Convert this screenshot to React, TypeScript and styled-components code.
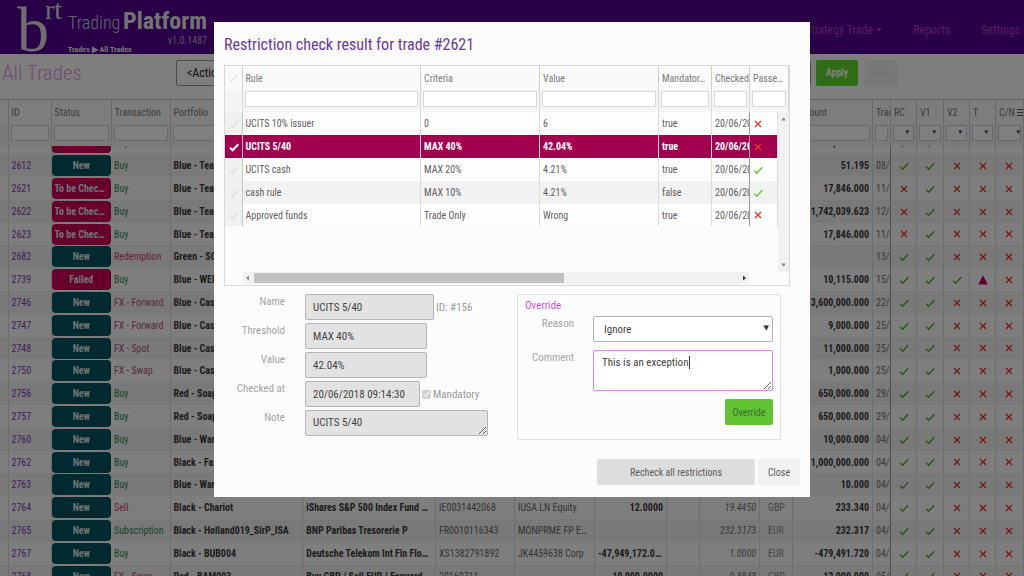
import React from "react";
import styled, { createGlobalStyle, css } from "styled-components";

const GlobalStyle = createGlobalStyle`
  * { box-sizing: border-box; }
  body { margin: 0; background: #fcfcfc; }
  body, button, input, select, textarea {
    font-family: "Roboto Condensed", "Liberation Sans Narrow", Roboto, sans-serif;
  }
  button, input, select, textarea { margin: 0; }
`;

/* ---------- icons ---------- */

const Icon = styled.svg`
  display: block;
  flex: none;
`;

const Check = ({ color = "#4fa52c", size = 10, weight = 1.3 }: { color?: string; size?: number; weight?: number }) => (
  <Icon width={size} height={size} viewBox="0 0 10 10" fill="none" stroke={color} strokeWidth={weight}>
    <path d="M1 5.6 3.6 8.2 9.3 2.2" />
  </Icon>
);

const Cross = ({ color = "#e8372c" }: { color?: string }) => (
  <Icon width="10" height="10" viewBox="0 0 10 10" fill="none" stroke={color} strokeWidth="1.4">
    <path d="M2 2 8 8M8 2 2 8" />
  </Icon>
);

const Warning = () => (
  <Icon width="10" height="10" viewBox="0 0 10 10">
    <path d="M5 .3 9.8 9.4H.2Z" fill="#c40060" />
    <path d="M5 3.4V6.4M5 7.2V8.2" stroke="#6d0036" strokeWidth="1" />
  </Icon>
);

/* ---------- page shell ---------- */

const Page = styled.div`
  height: 100vh;
  display: flex;
  flex-direction: column;
  overflow: hidden;
`;

const TopBar = styled.header`
  display: flex;
  flex: none;
  height: 54px;
  padding: 0 4px 0 17px;
  background: #52008f;
`;

const Logo = styled.div`
  display: flex;
  width: 51px;
  color: #dcdcdc;
  font-family: "Liberation Serif", serif;
  font-size: 64px;
  line-height: 59px;
`;

const LogoSup = styled.span`
  font-size: 28px;
  line-height: 20px;
  margin-left: -4px;
`;

const Brand = styled.div`
  display: flex;
  flex-direction: column;
  width: 139px;
  padding-top: 8px;
`;

const BrandName = styled.div`
  display: flex;
  justify-content: space-between;
  align-items: baseline;
  color: #d2c6dc;
  font-size: 18px;
  font-weight: 300;
  line-height: 26px;
`;

const BrandStrong = styled.strong`
  color: #e6e6e6;
  font-size: 24px;
  font-weight: 700;
`;

const Version = styled.span`
  align-self: flex-end;
  color: #b9a2cd;
  font-size: 10px;
  line-height: 10px;
`;

const Crumbs = styled.nav`
  color: #ececec;
  font-size: 8px;
  font-weight: 700;
  line-height: 8px;
`;

const Nav = styled.nav`
  display: flex;
  gap: 31px;
  margin-left: auto;
  padding-top: 22px;
`;

const NavLink = styled.a`
  display: flex;
  align-items: center;
  gap: 3px;
  height: 16px;
  color: #a53dbb;
  font-size: 12px;
  line-height: 16px;
  text-decoration: none;
`;

const Toolbar = styled.div`
  display: flex;
  flex: none;
  align-items: center;
  height: 45px;
  padding: 0 126px 8px 2px;
`;

const PageTitle = styled.h1`
  width: 174px;
  margin: 0;
  color: #e29ad6;
  font-size: 21px;
  font-weight: 300;
  line-height: 26px;
`;

const ActionSelect = styled.select`
  flex: 1;
  height: 26px;
  padding: 0 10px;
  appearance: none;
  border: 1px solid #9a9a9a;
  border-radius: 2px;
  background: #fff;
  color: #222;
  font-size: 12px;
`;

const Button = styled.button<{ $tone: "go" | "faint" | "grey" | "light"; $width: number }>`
  width: ${(p) => p.$width}px;
  height: 26px;
  padding: 0;
  border: 0;
  border-radius: 2px;
  font-size: 10px;
  ${(p) => p.$tone === "go" && css`background: #62c434; color: #3d6b2b;`}
  ${(p) => p.$tone === "faint" && css`background: #f0f0f0; color: #e4e4e4;`}
  ${(p) => p.$tone === "grey" && css`background: #dddddd; color: #5c5c5c;`}
  ${(p) => p.$tone === "light" && css`background: #f1f1f1; color: #5c5c5c;`}
`;

const ApplyButton = styled(Button)`
  margin: 0 7px 0 5px;
  background: #5cd82a;
  color: #fff;
  font-weight: 700;
`;

/* ---------- tables ---------- */

const Table = styled.table`
  width: 100%;
  table-layout: fixed;
  border-collapse: collapse;
  font-size: 10px;
`;

const HeadRow = styled.tr<{ $kind: "label" | "filter" }>`
  height: ${(p) => (p.$kind === "label" ? 24 : 22)}px;
  background: ${(p) => (p.$kind === "label" ? "#fafafa" : "#f5f5f5")};
`;

const Th = styled.th<{ $clip?: boolean }>`
  padding: 0 0 0 3px;
  border-right: 1px solid #d0d0d0;
  color: #7a7a7a;
  font-weight: 400;
  text-align: left;
  white-space: nowrap;
  overflow: hidden;
  text-overflow: ${(p) => (p.$clip ? "clip" : "ellipsis")};
`;

const FilterCell = styled.td`
  padding: 0 2px 5px;
  border-right: 1px solid #d8d8d8;
  vertical-align: bottom;
`;

const FilterInput = styled.input`
  display: block;
  width: 100%;
  height: 16px;
  padding: 0 2px;
  border: 1px solid #d9d9d9;
  background: #fff;
  font-size: 9px;
`;

const SelectWrap = styled.span<{ $inset: number }>`
  position: relative;
  display: block;
  &::after {
    content: "▾";
    position: absolute;
    right: ${(p) => p.$inset}px;
    top: 0;
    color: #333;
    font-family: "DejaVu Sans", sans-serif;
    font-size: 7px;
    line-height: 15px;
    pointer-events: none;
  }
`;

const FilterSelect = styled.select`
  display: block;
  width: 100%;
  height: 16px;
  padding: 0;
  appearance: none;
  border: 1px solid #d0d0d0;
  background: #fff;
  font-size: 8px;
`;

const Row = styled.tr<{ $selected?: boolean }>`
  height: 23px;
  background: #fdfdfd;
  color: #5f5f5f;
  &:nth-child(5n) { height: 22px; }
  &:nth-child(even) { background: #f2f2f2; }
  ${(p) => p.$selected && css`
    &&& { background: #a2004f; color: #fff; font-weight: 700; }
  `}
`;

const Td = styled.td<{ $tone?: string; $bold?: boolean; $italic?: boolean; $right?: boolean }>`
  padding: 0 3px;
  border-right: 1px solid #dcdcdc;
  color: ${(p) => p.$tone ?? "inherit"};
  font-weight: ${(p) => (p.$bold ? 700 : "inherit")};
  font-style: ${(p) => (p.$italic ? "italic" : "normal")};
  text-align: ${(p) => (p.$right ? "right" : "left")};
  white-space: nowrap;
  overflow: hidden;
  text-overflow: ellipsis;
`;

const ClipTd = styled(Td)`
  padding-right: 0;
  border-right-color: #9c9c9c;
  text-overflow: clip;
`;

const IconTd = styled(Td)`
  padding: 0 0 0 8px;
`;

const CurrencyTd = styled(Td)`
  padding-left: 8px;
`;

const BadgeTd = styled.td`
  padding: 0;
`;

const Badge = styled.span<{ $alert: boolean }>`
  display: block;
  height: 21px;
  padding: 0 3px;
  border-radius: 4px;
  background: ${(p) => (p.$alert ? "#cc0056" : "#005460")};
  color: #dfe6e8;
  font-size: 10px;
  font-weight: 700;
  line-height: 21px;
  text-align: center;
  overflow: hidden;
  text-overflow: ellipsis;
  white-space: nowrap;
`;

const GridHead = styled.div`
  flex: none;
  height: 47px;
  border-top: 1px solid #c4c4c4;
  background: #f3f3f3;
`;

const GridBody = styled.div`
  flex: 1;
  min-height: 0;
  overflow: hidden;
`;

const ScrolledTable = styled(Table)`
  margin-top: -15px;
`;

const MenuHead = styled.span`
  display: flex;
  justify-content: space-between;
  align-items: center;
`;

const columns: (number | null)[] = [8, 43, 60, 59, null, null, 79, 80, 72, 33, 60, 33, 80, 18, 26, 27, 26, 26, 28];
const Cols = ({ widths }: { widths: (number | null)[] }) => (
  <colgroup>{widths.map((w, i) => (w === null ? <col key={i} /> : <col key={i} width={w} />))}</colgroup>
);

const heads = ["", "ID", "Status", "Transaction", "Portfolio", "Instrument", "ISIN", "Ticker", "Quantity", "", "Price", "Ccy", "Amount", "Trade"];
const flagHeads = ["RC", "V1", "V2", "T"];

type Trade = [string, string, string, string, string, string, string, string, string, string, string, string, string];
const trades: Trade[] = [
  ["2611", "To be Checked", "Buy", "Blue - Team", "", "", "", "", "", "", "17,846.000", "08/06/2018", "ccxxx"],
  ["2612", "New", "Buy", "Blue - Team", "", "", "", "", "", "", "51.195", "08/06/2018", "ccxxx"],
  ["2621", "To be Checked", "Buy", "Blue - Team", "", "", "", "", "", "", "17,846.000", "11/06/2018", "xcxxx"],
  ["2622", "To be Checked", "Buy", "Blue - Team", "", "", "", "", "", "", "1,742,039.623", "12/06/2018", "xcxxx"],
  ["2623", "To be Checked", "Buy", "Blue - Team", "", "", "", "", "", "", "17,846.000", "11/06/2018", "xcxxx"],
  ["2682", "New", "Redemption", "Green - SO", "", "", "", "", "", "", "", "13/06/2018", "ccxxx"],
  ["2739", "Failed", "Buy", "Blue - WEB", "", "", "", "", "", "", "10,115.000", "15/06/2018", "cccwx"],
  ["2746", "New", "FX - Forward", "Blue - Cash", "", "", "", "", "", "", "3,600,000.000", "22/06/2018", "ccxxx"],
  ["2747", "New", "FX - Forward", "Blue - Cash", "", "", "", "", "", "", "9,000.000", "25/06/2018", "ccxxx"],
  ["2748", "New", "FX - Spot", "Blue - Cash", "", "", "", "", "", "", "11,000.000", "25/06/2018", "ccxxx"],
  ["2750", "New", "FX - Swap", "Blue - Cash", "", "", "", "", "", "", "1,000.000", "25/06/2018", "ccxxx"],
  ["2756", "New", "Buy", "Red - Soap", "", "", "", "", "", "", "650,000.000", "29/06/2018", "ccxxx"],
  ["2757", "New", "Buy", "Red - Soap", "", "", "", "", "", "", "650,000.000", "29/06/2018", "ccxxx"],
  ["2760", "New", "Buy", "Blue - Wars", "", "", "", "", "", "", "10,000.000", "04/07/2018", "ccxxx"],
  ["2762", "New", "Buy", "Black - Fax", "", "", "", "", "", "", "1,000,000.000", "04/07/2018", "ccxxx"],
  ["2763", "New", "Buy", "Blue - Wars", "", "", "", "", "", "", "10.000", "04/07/2018", "ccxxx"],
  ["2764", "New", "Sell", "Black - Chariot", "iShares S&P 500 Index Fund …", "IE0031442068", "IUSA LN Equity", "12.0000", "", "19.4450|GBP", "233.340", "04/07/2018", "ccxxx"],
  ["2765", "New", "Subscription", "Black - Holland019_SirP_ISA", "BNP Paribas Tresorerie P", "FR0010116343", "MONPRME FP Equity", "", "", "232.3173|EUR", "232.317", "04/07/2018", "ccxxx"],
  ["2767", "New", "Buy", "Black - BUB004", "Deutsche Telekom Int Fin Floating", "XS1382791892", "JK4459638 Corp", "-47,949,172.0000", "", "1.0000|EUR", "-479,491.720", "04/07/2018", "ccxxx"],
  ["2768", "New", "FX - Swap", "Red - BAM003", "Buy GBP / Sell EUR / Forward", "20160711", "", "10,000.0000", "", "0.8843|GBP", "12,000.000", "05/07/2018", "ccxxx"],
];

const kindTone = (kind: string) => {
  if (kind === "Buy" || kind === "Subscription") return "#2a8a4a";
  if (kind === "Redemption" || kind === "Sell") return "#d63a63";
  return "#a8587f";
};

const Flag = ({ code }: { code: string }) => (code === "c" ? <Check /> : code === "w" ? <Warning /> : <Cross />);

const TradeRow = ({ trade }: { trade: Trade }) => {
  const [id, status, kind, portfolio, instrument, isin, ticker, qty, blank, price, amount, date, flags] = trade;
  const [value, ccy] = price.split("|");
  return (
    <Row>
      <Td />
      <Td $tone="#7d3fb8">{id}</Td>
      <BadgeTd><Badge $alert={status !== "New"}>{status}</Badge></BadgeTd>
      <Td $tone={kindTone(kind)}>{kind}</Td>
      <Td $tone="#3a3a3a" $bold>{portfolio}</Td>
      <Td $tone="#3a3a3a" $bold>{instrument}</Td>
      <Td $tone="#6a6a6a">{isin}</Td>
      <Td $tone="#6a6a6a">{ticker}</Td>
      <Td $tone="#3a3a3a" $bold $right>{qty}</Td>
      <Td>{blank}</Td>
      <Td $tone="#747474" $italic $right>{value}</Td>
      <CurrencyTd $tone="#8a8a8a">{ccy}</CurrencyTd>
      <Td $tone="#3a3a3a" $bold $right>{amount}</Td>
      <ClipTd $tone="#747474">{date}</ClipTd>
      {flags.split("").map((code, i) => (
        <IconTd key={i}><Flag code={code} /></IconTd>
      ))}
    </Row>
  );
};

/* ---------- dialog ---------- */

const Backdrop = styled.div`
  position: fixed;
  inset: 0;
  display: flex;
  justify-content: center;
  align-items: flex-start;
  padding: 22px 214px;
  background: rgba(0, 0, 0, 0.5);
`;

const Dialog = styled.section`
  flex: 1;
  min-width: 596px;
  padding: 13px 10px 12px;
  background: #fcfcfc;
`;

const DialogTitle = styled.h2`
  margin: 0 0 10px;
  color: #6a3aa0;
  font-size: 16px;
  font-weight: 400;
  line-height: 20px;
`;

const ResultGrid = styled.div`
  margin-right: 10px;
  border: 1px solid #d8d8d8;
`;

const ResultArea = styled.div`
  display: grid;
  grid-template-columns: minmax(0, 1fr) 11px;
  height: 160px;
`;

const VScroll = styled.div`
  display: flex;
  flex-direction: column;
  justify-content: space-between;
  align-items: center;
  padding: 4px 0;
  background: #f1f1f1;
`;

const HScroll = styled.div`
  display: flex;
  align-items: center;
  height: 12px;
  margin: 0 40px 1px 18px;
  background: #f1f1f1;
`;

const HTrack = styled.div`
  flex: 1;
  padding: 0 176px 0 2px;
`;

const HThumb = styled.div`
  height: 10px;
  background: #c1c1c1;
`;

const ArrowGlyph = ({ d, color = "#8a8a8a" }: { d: string; color?: string }) => (
  <Icon width="9" height="6" viewBox="0 0 9 6"><path d={d} fill={color} /></Icon>
);

const MarkTd = styled(Td)<{ $on?: boolean }>`
  padding: 0 0 0 4px;
  border-right-color: #c4c4c4;
  background: ${(p) => (p.$on ? "transparent" : "#f0f0f0")};
`;

const Panels = styled.div`
  display: grid;
  grid-template-columns: minmax(0, 1fr) 264px;
  gap: 29px;
  padding: 8px 19px 0 0;
`;

const Details = styled.form`
  display: flex;
  flex-direction: column;
  gap: 3px;
`;

const FieldRow = styled.div<{ $gap: number }>`
  display: flex;
  gap: ${(p) => p.$gap}px;
`;

const FieldLabel = styled.label<{ $width: number }>`
  width: ${(p) => p.$width}px;
  color: #a4a4a4;
  font-size: 11px;
  line-height: 16px;
  text-align: right;
`;

const fieldLook = css`
  border: 1px solid #b5b5b5;
  border-radius: 2px;
  color: #444;
  font-size: 11px;
`;

const ReadOnly = styled.input<{ $width: number }>`
  ${fieldLook}
  width: ${(p) => p.$width}px;
  height: 26px;
  padding: 0 7px;
  background: #e2e2e2;
`;

const Note = styled.textarea`
  ${fieldLook}
  display: block;
  width: 183px;
  height: 26px;
  padding: 5px 7px;
  background: #e2e2e2;
  line-height: 14px;
  overflow: hidden;
`;

const Aside = styled.span`
  display: flex;
  align-items: center;
  gap: 2px;
  margin-left: -18px;
  color: #999;
  font-size: 11px;
`;

const Tick = styled.input`
  width: 9px;
  height: 9px;
  accent-color: #999;
`;

const OverridePanel = styled.form`
  height: 146px;
  padding: 4px 7px;
  border: 1px solid #dedede;
  border-radius: 2px;
`;

const PanelTitle = styled.h3`
  margin: 0 0 3px;
  color: #cc55cc;
  font-size: 11px;
  font-weight: 400;
  line-height: 14px;
`;

const OverrideRow = styled(FieldRow)`
  margin-bottom: 8px;
`;

const ReasonWrap = styled(SelectWrap)`
  flex: 1;
  &::after { content: "▼"; line-height: 24px; }
`;

const Reason = styled.select`
  ${fieldLook}
  display: block;
  width: 100%;
  height: 26px;
  padding: 0 10px;
  appearance: none;
  background: #fff;
`;

const CommentWrap = styled.span`
  position: relative;
  flex: 1;
`;

const Comment = styled.textarea`
  ${fieldLook}
  display: block;
  width: 100%;
  height: 41px;
  padding: 5px 8px;
  border-color: #dd8add;
  background: #fff;
  line-height: 14px;
`;

const Caret = styled.span`
  position: absolute;
  top: 6px;
  left: 96px;
  width: 1px;
  height: 13px;
  background: #333;
`;

const Actions = styled.div`
  display: flex;
  justify-content: flex-end;
  gap: 3px;
`;

const FooterActions = styled(Actions)`
  padding-top: 19px;
`;

const results: [string, string, string, string, boolean][] = [
  ["UCITS 10% issuer", "0", "6", "true", false],
  ["UCITS 5/40", "MAX 40%", "42.04%", "true", false],
  ["UCITS cash", "MAX 20%", "4.21%", "true", true],
  ["cash rule", "MAX 10%", "4.21%", "false", true],
  ["Approved funds", "Trade Only", "Wrong", "true", false],
];

const resultColumns = [17, null, 119, 119, 53, 38, 28];
const resultHeadColumns = [17, null, 119, 119, 53, 38, 39];
const resultHeads = ["Rule", "Criteria", "Value", "Mandator…", "Checked", "Passe…"];

const RestrictionDialog = () => (
  <Backdrop>
    <Dialog role="dialog" aria-labelledby="dialog-title">
      <DialogTitle id="dialog-title">Restriction check result for trade #2621</DialogTitle>
      <ResultGrid>
        <Table>
          <Cols widths={resultHeadColumns} />
          <thead>
            <HeadRow $kind="label">
              <Th><Check color="#e4e4e4" /></Th>
              {resultHeads.map((h) => <Th key={h}>{h}</Th>)}
            </HeadRow>
            <HeadRow $kind="filter">
              <FilterCell />
              {resultHeads.map((h) => (
                <FilterCell key={h}><FilterInput aria-label={`Filter ${h}`} /></FilterCell>
              ))}
            </HeadRow>
          </thead>
        </Table>
        <ResultArea>
          <div>
            <Table>
              <Cols widths={resultColumns} />
              <tbody>
                {results.map(([rule, criteria, value, mandatory, passed], i) => (
                  <Row key={rule} $selected={i === 1}>
                    <MarkTd $on={i === 1}>
                      <Check color={i === 1 ? "#fff" : "#dcdcdc"} weight={i === 1 ? 2 : 1.3} />
                    </MarkTd>
                    <Td>{rule}</Td>
                    <Td>{criteria}</Td>
                    <Td>{value}</Td>
                    <Td>{mandatory}</Td>
                    <ClipTd>20/06/2018</ClipTd>
                    <Td>{passed ? <Check color="#5fc832" /> : <Cross />}</Td>
                  </Row>
                ))}
              </tbody>
            </Table>
          </div>
          <VScroll>
            <ArrowGlyph d="M2 4.5H7L4.5 1.5Z" />
            <ArrowGlyph d="M2 1.5H7L4.5 4.5Z" />
          </VScroll>
        </ResultArea>
        <HScroll>
          <ArrowGlyph d="M6 .5V5.5L3 3Z" />
          <HTrack><HThumb /></HTrack>
          <ArrowGlyph d="M3 .5V5.5L6 3Z" color="#333" />
        </HScroll>
      </ResultGrid>
      <Panels>
        <Details>
          <FieldRow $gap={20}>
            <FieldLabel $width={61} htmlFor="name">Name</FieldLabel>
            <ReadOnly id="name" $width={129} readOnly defaultValue="UCITS 5/40" />
            <Aside>ID: #156</Aside>
          </FieldRow>
          <FieldRow $gap={20}>
            <FieldLabel $width={61} htmlFor="threshold">Threshold</FieldLabel>
            <ReadOnly id="threshold" $width={122} readOnly defaultValue="MAX 40%" />
          </FieldRow>
          <FieldRow $gap={20}>
            <FieldLabel $width={61} htmlFor="value">Value</FieldLabel>
            <ReadOnly id="value" $width={122} readOnly defaultValue="42.04%" />
          </FieldRow>
          <FieldRow $gap={20}>
            <FieldLabel $width={61} htmlFor="checked">Checked at</FieldLabel>
            <ReadOnly id="checked" $width={115} readOnly defaultValue="20/06/2018 09:14:30" />
            <Aside>
              <Tick id="mandatory" type="checkbox" defaultChecked disabled />
              <label htmlFor="mandatory">Mandatory</label>
            </Aside>
          </FieldRow>
          <FieldRow $gap={20}>
            <FieldLabel $width={61} htmlFor="note">Note</FieldLabel>
            <Note id="note" readOnly defaultValue="UCITS 5/40" />
          </FieldRow>
        </Details>
        <OverridePanel>
          <PanelTitle>Override</PanelTitle>
          <OverrideRow $gap={19}>
            <FieldLabel $width={49} htmlFor="reason">Reason</FieldLabel>
            <ReasonWrap $inset={4}>
              <Reason id="reason"><option>Ignore</option></Reason>
            </ReasonWrap>
          </OverrideRow>
          <OverrideRow $gap={19}>
            <FieldLabel $width={49} htmlFor="comment">Comment</FieldLabel>
            <CommentWrap>
              <Comment id="comment" defaultValue="This is an exception" />
              <Caret />
            </CommentWrap>
          </OverrideRow>
          <Actions>
            <Button type="button" $tone="go" $width={48}>Override</Button>
          </Actions>
        </OverridePanel>
      </Panels>
      <FooterActions>
        <Button type="button" $tone="grey" $width={158}>Recheck all restrictions</Button>
        <Button type="button" $tone="light" $width={42}>Close</Button>
      </FooterActions>
    </Dialog>
  </Backdrop>
);

export default function App() {
  return (
    <>
      <GlobalStyle />
      <Page>
        <TopBar>
          <Logo>b<LogoSup>rt</LogoSup></Logo>
          <Brand>
            <BrandName>Trading <BrandStrong>Platform</BrandStrong></BrandName>
            <Version>v1.0.1487</Version>
            <Crumbs>Trades ▶ All Trades</Crumbs>
          </Brand>
          <Nav>
            <NavLink href="#strategy">
              Strategy Trade
              <Icon width="6" height="4" viewBox="0 0 6 4"><path d="M0 0H6L3 3.5Z" fill="#a53dbb" /></Icon>
            </NavLink>
            <NavLink href="#reports">Reports</NavLink>
            <NavLink href="#settings">Settings</NavLink>
          </Nav>
        </TopBar>
        <Toolbar>
          <PageTitle>All Trades</PageTitle>
          <ActionSelect aria-label="Actions"><option>&lt;Actions&gt;</option></ActionSelect>
          <ApplyButton $tone="go" $width={42}>Apply</ApplyButton>
          <Button $tone="faint" $width={33}>Clear</Button>
        </Toolbar>
        <GridHead>
          <Table>
            <Cols widths={columns} />
            <thead>
              <HeadRow $kind="label">
                {heads.map((h, i) => <Th key={i} $clip={h === "Trade"}>{h}</Th>)}
                {flagHeads.map((h) => <Th key={h}>{h}</Th>)}
                <Th>
                  <MenuHead>
                    C/N
                    <Icon width="6" height="9" viewBox="0 0 6 9" stroke="#555" strokeWidth="1">
                      <path d="M0 1.5H6M0 4.5H6M0 7.5H6" />
                    </Icon>
                  </MenuHead>
                </Th>
              </HeadRow>
              <HeadRow $kind="filter">
                <FilterCell />
                {heads.slice(1).map((h, i) => (
                  <FilterCell key={i}><FilterInput aria-label={`Filter ${h}`} /></FilterCell>
                ))}
                {[...flagHeads, "C/N"].map((h) => (
                  <FilterCell key={h}>
                    <SelectWrap $inset={h === "C/N" ? 1 : 5}>
                      <FilterSelect aria-label={`Filter ${h}`}><option /></FilterSelect>
                    </SelectWrap>
                  </FilterCell>
                ))}
              </HeadRow>
            </thead>
          </Table>
        </GridHead>
        <GridBody>
          <ScrolledTable>
            <Cols widths={columns} />
            <tbody>
              {trades.map((t) => <TradeRow key={t[0]} trade={t} />)}
            </tbody>
          </ScrolledTable>
        </GridBody>
      </Page>
      <RestrictionDialog />
    </>
  );
}
